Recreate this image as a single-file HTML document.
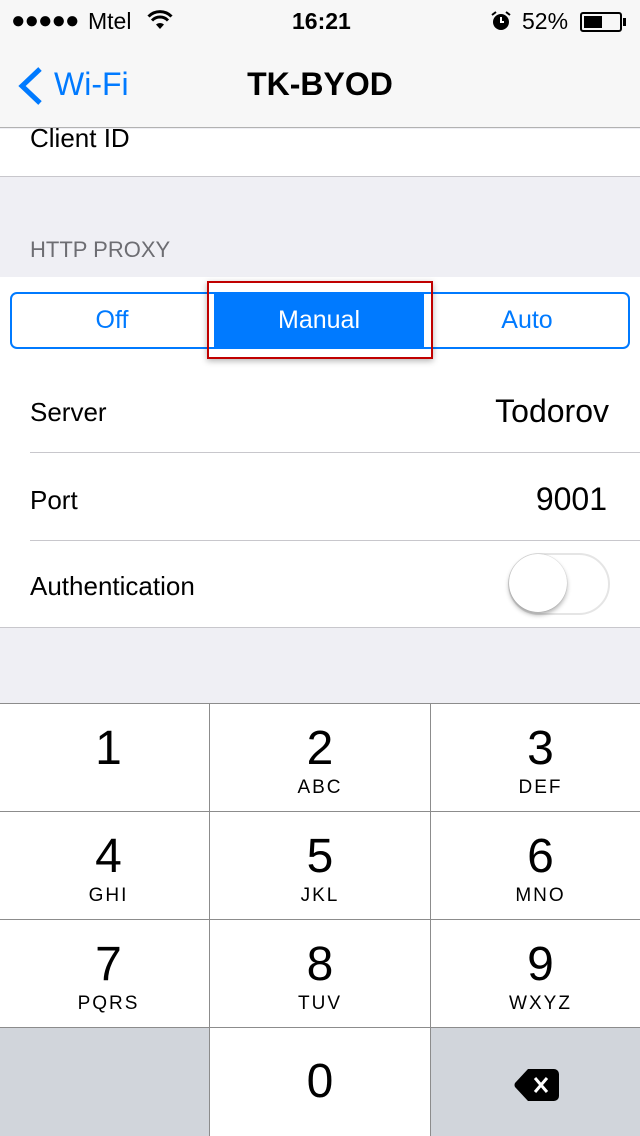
<!DOCTYPE html>
<html><head><meta charset="utf-8"><style>
*{margin:0;padding:0;box-sizing:border-box}
body{width:640px;height:1136px;overflow:hidden;background:#efeff4;font-family:"Liberation Sans",sans-serif;position:relative}
.abs{position:absolute}
.row{position:absolute;left:0;width:640px;background:#fff}
.lbl{position:absolute;left:30px;font-size:26px;color:#000}
.key{position:absolute;background:#fff;text-align:center;color:#000}
.key .n{font-size:48px;line-height:48px;display:block;margin-top:21px}
.key .l{font-size:19px;letter-spacing:2px;display:block;margin-top:4px}
.kl{padding-left:8px}.kr{padding-left:10px}
</style></head><body>
<div class="abs" style="left:0;top:0;width:640px;height:128px;background:#f7f7f7;border-bottom:1px solid #b2b2b2"></div>
<div class="abs" style="left:11px;top:7px;font-size:24px;letter-spacing:-1px">●●●●●</div>
<div class="abs" style="left:88px;top:8px;font-size:23px">Mtel</div>
<svg class="abs" style="left:147px;top:10px" width="26" height="20" viewBox="0 0 26 20"><path d="M13 19 L9 14.5 A6 6 0 0 1 17 14.5 Z" fill="#000"/><path d="M5 10.5 A11 11 0 0 1 21 10.5" stroke="#000" stroke-width="3" fill="none"/><path d="M1.5 6.5 A16 16 0 0 1 24.5 6.5" stroke="#000" stroke-width="3" fill="none"/></svg>
<div class="abs" style="left:292px;top:8px;font-size:23px;font-weight:bold">16:21</div>
<svg class="abs" style="left:490px;top:10px" width="22" height="22" viewBox="0 0 22 22"><circle cx="11" cy="12" r="8" fill="#000"/><path d="M11 7v5h3" stroke="#fff" stroke-width="2" fill="none"/><path d="M2 5l4-3M20 5l-4-3" stroke="#000" stroke-width="2"/></svg>
<div class="abs" style="left:522px;top:8px;font-size:23px">52%</div>
<div class="abs" style="left:580px;top:12px;width:42px;height:20px;border:2px solid #000;border-radius:3px"><div style="margin:2px;width:18px;height:12px;background:#000"></div></div>
<div class="abs" style="left:623px;top:18px;width:3px;height:8px;background:#000"></div>
<svg class="abs" style="left:16px;top:66px" width="28" height="40" viewBox="0 0 28 40"><path d="M24 3 L6 20 L24 37" stroke="#007aff" stroke-width="5" fill="none"/></svg>
<div class="abs" style="left:54px;top:66px;font-size:32px;color:#007aff">Wi-Fi</div>
<div class="abs" style="left:0;width:640px;top:66px;text-align:center;font-size:32px;font-weight:bold">TK-BYOD</div>
<div class="row" style="top:129px;height:48px;border-bottom:1px solid #c8c7cc"><div class="lbl" style="top:-6px">Client ID</div></div>
<div class="abs" style="left:30px;top:237px;font-size:22px;color:#6d6d72">HTTP PROXY</div>
<div class="row" style="top:277px;height:351px;border-bottom:1px solid #c8c7cc"></div>
<div class="abs" style="left:10px;top:292px;width:620px;height:57px;border:2px solid #007aff;border-radius:7px"></div>
<div class="abs" style="left:214px;top:292px;width:210px;height:57px;background:#007aff"></div>
<div class="abs" style="left:10px;width:204px;top:306px;text-align:center;font-size:25px;color:#007aff">Off</div>
<div class="abs" style="left:214px;width:210px;top:306px;text-align:center;font-size:25px;color:#fff">Manual</div>
<div class="abs" style="left:424px;width:206px;top:306px;text-align:center;font-size:25px;color:#007aff">Auto</div>
<div class="abs" style="left:207px;top:281px;width:226px;height:78px;border:2px solid #c00000;box-shadow:0 2px 6px rgba(0,0,0,.3)"></div>
<div class="lbl" style="top:397px">Server</div>
<div class="abs" style="right:31px;top:393px;font-size:32px">Todorov</div>
<div class="abs" style="left:30px;top:452px;width:610px;height:1px;background:#c8c7cc"></div>
<div class="lbl" style="top:485px">Port</div>
<div class="abs" style="right:33px;top:481px;font-size:32px">9001</div>
<div class="abs" style="left:30px;top:540px;width:610px;height:1px;background:#c8c7cc"></div>
<div class="lbl" style="top:571px">Authentication</div>
<div class="abs" style="left:508px;top:553px;width:102px;height:62px;border:2px solid #e5e5e5;border-radius:31px"></div>
<div class="abs" style="left:509px;top:554px;width:58px;height:58px;border-radius:50%;background:#fff;box-shadow:0 3px 5px rgba(0,0,0,.3),0 0 1px rgba(0,0,0,.3)"></div>
<div class="abs" style="left:0;top:703px;width:640px;height:433px;background:#8c8c8c"></div>
<div class="key kl" style="left:0;top:704px;width:209px;height:107px"><span class="n">1</span></div>
<div class="key" style="left:210px;top:704px;width:220px;height:107px"><span class="n">2</span><span class="l">ABC</span></div>
<div class="key kr" style="left:431px;top:704px;width:209px;height:107px"><span class="n">3</span><span class="l">DEF</span></div>
<div class="key kl" style="left:0;top:812px;width:209px;height:107px"><span class="n">4</span><span class="l">GHI</span></div>
<div class="key" style="left:210px;top:812px;width:220px;height:107px"><span class="n">5</span><span class="l">JKL</span></div>
<div class="key kr" style="left:431px;top:812px;width:209px;height:107px"><span class="n">6</span><span class="l">MNO</span></div>
<div class="key kl" style="left:0;top:920px;width:209px;height:107px"><span class="n">7</span><span class="l">PQRS</span></div>
<div class="key" style="left:210px;top:920px;width:220px;height:107px"><span class="n">8</span><span class="l">TUV</span></div>
<div class="key kr" style="left:431px;top:920px;width:209px;height:107px"><span class="n">9</span><span class="l">WXYZ</span></div>
<div class="key" style="left:0;top:1028px;width:209px;height:108px;background:#d1d5db"></div>
<div class="key" style="left:210px;top:1028px;width:220px;height:108px"><span class="n" style="margin-top:30px">0</span></div>
<div class="key" style="left:431px;top:1028px;width:209px;height:108px;background:#d1d5db"></div>
<svg class="abs" style="left:514px;top:1068px" width="46" height="34" viewBox="0 0 46 34"><path d="M14 1 H40 A5 5 0 0 1 45 6 V28 A5 5 0 0 1 40 33 H14 L1 19 Q0 17 1 15 Z" fill="#000"/><path d="M21 10 L33 24 M33 10 L21 24" stroke="#fff" stroke-width="3"/></svg>
</body></html>
